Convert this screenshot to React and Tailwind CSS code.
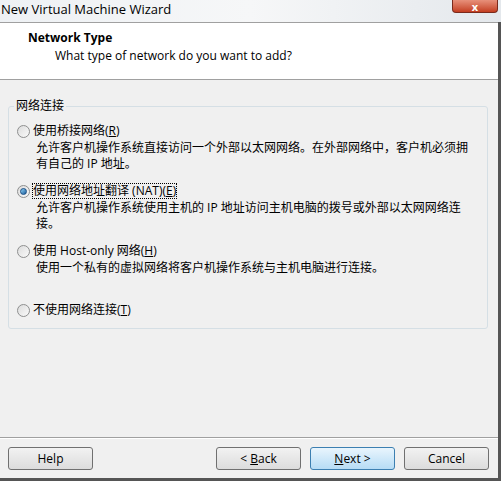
import React from "react";

const font = { fontFamily: '"Open Sans", "Noto Sans CJK SC", sans-serif' };

function Radio({ checked }) {
  return (
    <span className="relative inline-block w-[13px] h-[13px] rounded-full border border-[#8e8f8f] bg-gradient-to-br from-[#dcdcdc] to-[#fafafa] shrink-0">
      {checked && (
        <span className="absolute left-[2px] top-[2px] w-[7px] h-[7px] rounded-full bg-gradient-to-br from-[#8fd1f5] to-[#1b5f9c] border border-[#1a4f86]" />
      )}
    </span>
  );
}

function Option({ checked, label, desc, focus }) {
  return (
    <div className="flex flex-col">
      <div className="flex items-center gap-[3px] h-[16px]">
        <Radio checked={checked} />
        <span className={focus ? "outline-1 outline-dotted outline-black leading-[14px]" : "leading-[14px]"}>
          {label}
        </span>
      </div>
      {desc && <div className="pl-[19px] pt-[1px] leading-[16px] w-[458px]">{desc}</div>}
    </div>
  );
}

function Btn({ children, primary }) {
  return (
    <button
      className={
        "w-[85px] h-[23px] rounded-[3px] border text-[12px] text-black " +
        (primary
          ? "border-[#3c7fb1] bg-gradient-to-b from-[#e9f5fd] to-[#b6dcf5]"
          : "border-[#707070] bg-gradient-to-b from-[#f2f2f2] to-[#dcdcdc]")
      }
    >
      {children}
    </button>
  );
}

export default function App() {
  return (
    <div className="w-[501px] h-[481px] bg-[#f0f0f0] flex flex-col text-[12px] text-black overflow-hidden" style={font}>
      <div className="h-[22px] flex items-start justify-between bg-gradient-to-r from-[#eef1f4] via-[#f6f7f8] to-[#e4e8ec]">
        <span className="text-[13px] leading-[16px] pt-[1px] pl-[1px]">New Virtual Machine Wizard</span>
        <div className="w-[46px] h-[13px] mr-[3px] rounded-b-[4px] border border-t-0 border-[#7a2a1c] bg-gradient-to-b from-[#e7907a] to-[#c33d1f] flex items-center justify-center text-white text-[11px] font-bold leading-none">
          x
        </div>
      </div>
      <div className="flex flex-1 border-r-[3px] border-[#555] border-b-[3px]">
        <div className="flex-1 flex flex-col">
          <div className="h-[58px] bg-white border-t border-b border-[#a0a0a0] pl-[28px] pt-[7px]">
            <div className="font-bold text-[12px] leading-[15px]">Network Type</div>
            <div className="pl-[27px] pt-[3px] leading-[15px]">What type of network do you want to add?</div>
          </div>
          <div className="px-[8px] pt-[26px]">
            <fieldset className="relative border border-[#d5dfe5] rounded-[3px] h-[223px] w-[480px] pl-[8px] pt-[16px]">
              <span className="absolute -top-[9px] left-[5px] bg-[#f0f0f0] px-[2px] leading-[16px]">网络连接</span>
              <div className="flex flex-col gap-[11px]">
                <Option label={<>使用桥接网络(<u>R</u>)</>} desc="允许客户机操作系统直接访问一个外部以太网网络。在外部网络中，客户机必须拥有自己的 IP 地址。" />
                <Option checked focus label={<>使用网络地址翻译 (NAT)(<u>E</u>)</>} desc="允许客户机操作系统使用主机的 IP 地址访问主机电脑的拨号或外部以太网网络连接。" />
                <div className="h-[48px]">
                  <Option label={<>使用 Host-only 网络(<u>H</u>)</>} desc="使用一个私有的虚拟网络将客户机操作系统与主机电脑进行连接。" />
                </div>
                <Option label={<>不使用网络连接(<u>T</u>)</>} />
              </div>
            </fieldset>
          </div>
          <div className="flex-1" />
          <div className="border-t border-[#a0a0a0] h-[1px] mb-[9px] shadow-[0_1px_0_#ffffff]" />
          <div className="flex items-center px-[8px] pb-[8px]">
            <Btn>Help</Btn>
            <div className="flex-1" />
            <div className="flex gap-[9px] mr-[1px]">
              <Btn>&lt; <u>B</u>ack</Btn>
              <Btn primary><u>N</u>ext &gt;</Btn>
              <Btn>Cancel</Btn>
            </div>
          </div>
        </div>
      </div>
    </div>
  );
}
